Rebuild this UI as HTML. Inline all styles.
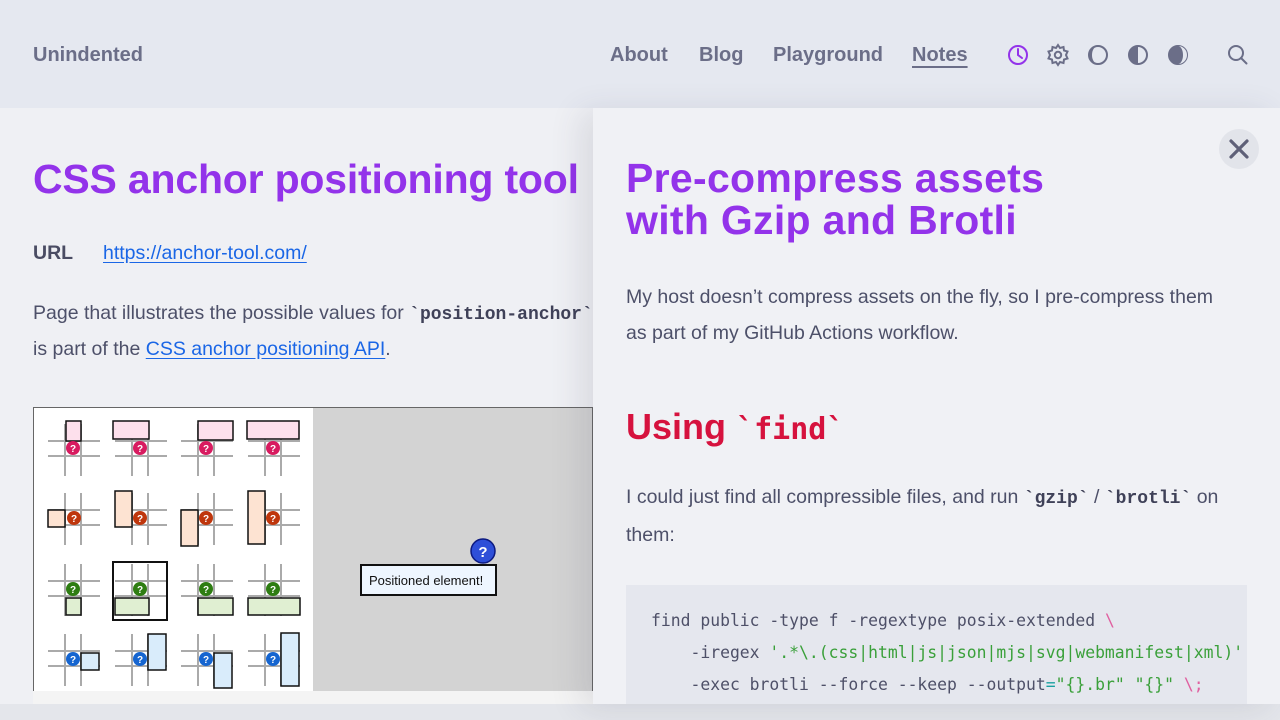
<!DOCTYPE html>
<html><head><meta charset="utf-8"><style>
*{margin:0;padding:0;box-sizing:border-box}
html,body{width:1280px;height:720px;overflow:hidden}
body{background:#e4e6eb;font-family:"Liberation Sans",sans-serif;position:relative}
.abs{position:absolute;white-space:nowrap}
#hdr{position:absolute;left:0;top:0;width:1280px;height:108px;background:#e5e8f0}
.nav{font-size:20px;font-weight:bold;color:#6b6e88;top:44px}
#left{position:absolute;left:0;top:108px;width:700px;height:596px;background:#eff0f4}
#panel{position:absolute;left:593px;top:108px;width:687px;height:596px;background:#f0f1f5;box-shadow:-12px 4px 30px rgba(60,60,80,.12);overflow:hidden}
.h1{font-size:41px;font-weight:bold;color:#9333ea;letter-spacing:-0.2px}
.p{font-size:19.5px;color:#4d5069}
.code{font-family:"Liberation Mono","DejaVu Sans Mono",monospace;font-weight:bold;color:#3f4158;font-size:18px}
a{color:#1a66e6;text-decoration:underline;text-underline-offset:3px}
.pre{font-family:"DejaVu Sans Mono","Liberation Mono",monospace;font-size:16.4px;color:#4e5068;white-space:pre}
.g{color:#3aa03a}.pk{color:#e060a0}.t{color:#18a0a0}
</style></head><body>
<div id="hdr"></div>
<div class="abs nav" style="left:33px">Unindented</div>
<div class="abs nav" style="left:610px">About</div>
<div class="abs nav" style="left:699px">Blog</div>
<div class="abs nav" style="left:773px">Playground</div>
<div class="abs nav" style="left:912px;text-decoration:underline;text-underline-offset:5px;text-decoration-thickness:2px">Notes</div>
<svg class="abs" style="left:1000px;top:35px" width="260" height="40" viewBox="0 0 260 40" fill="none" stroke-width="2">
 <circle cx="18" cy="20" r="9" stroke="#9333ea"/><path d="M18 14v6l4 3" stroke="#9333ea" stroke-linecap="round"/>
 <g stroke="#6b6e88"><circle cx="58" cy="20" r="3.2"/><path d="M58 10l2 3 3.5-1 .5 3.5 3.5 1-1.5 3.5 1.5 3.5-3.5 1-.5 3.5-3.5-1-2 3-2-3-3.5 1-.5-3.5-3.5-1 1.5-3.5-1.5-3.5 3.5-1 .5-3.5 3.5 1z"/></g>
 <circle cx="98" cy="20" r="9" stroke="#6b6e88"/><path d="M98 11a9 9 0 0 0 0 18a6 9 0 0 1 0-18z" fill="#6b6e88"/>
 <circle cx="138" cy="20" r="9" stroke="#6b6e88"/><path d="M138 11a9 9 0 0 0 0 18z" fill="#6b6e88"/>
 <circle cx="178" cy="20" r="9" stroke="#6b6e88" fill="#6b6e88"/><path d="M178 11a5 9 0 0 1 0 18a9 9 0 0 0 0-18z" fill="#e5e8f0"/>
 <circle cx="236" cy="18" r="7" stroke="#6b6e88"/><path d="M241 23l5.5 5.5" stroke="#6b6e88" stroke-linecap="round"/>
</svg>

<div id="left"></div>
<div class="abs h1" style="left:33px;top:156px">CSS anchor positioning tool</div>
<div class="abs p" style="left:33px;top:242px;font-weight:bold;color:#4a4c63">URL</div>
<div class="abs p" style="left:103px;top:242px"><a>https://anchor-tool.com/</a></div>
<div class="abs p" style="left:33px;top:302px">Page that illustrates the possible values for <span class="code">`position-anchor`</span></div>
<div class="abs p" style="left:33px;top:338px">is part of the <a>CSS anchor positioning API</a>.</div>

<svg class="abs" style="left:33px;top:407px" width="560" height="297" viewBox="0 0 560 297">
 <rect x="0" y="0" width="560" height="297" fill="#fff"/>
 <rect x="280" y="0" width="280" height="284" fill="#d3d3d3"/>
 <rect x="0.5" y="0.5" width="559" height="296" fill="none" stroke="#666"/>
 <g stroke="#aaa" stroke-width="2">
  <path d="M15 34h52M15 49h52M32 17v52M48 17v52 M82 34h52M82 49h52M99 17v52M115 17v52 M148 34h52M148 49h52M165 17v52M181 17v52 M215 34h52M215 49h52M232 17v52M248 17v52"/>
  <path d="M15 103h52M15 118h52M32 86v52M48 86v52 M82 103h52M82 118h52M99 86v52M115 86v52 M148 103h52M148 118h52M165 86v52M181 86v52 M215 103h52M215 118h52M232 86v52M248 86v52"/>
  <path d="M15 174h52M15 189h52M32 157v52M48 157v52 M82 174h52M82 189h52M99 157v52M115 157v52 M148 174h52M148 189h52M165 157v52M181 157v52 M215 174h52M215 189h52M232 157v52M248 157v52"/>
  <path d="M15 244h52M15 259h52M32 227v52M48 227v52 M82 244h52M82 259h52M99 227v52M115 227v52 M148 244h52M148 259h52M165 227v52M181 227v52 M215 244h52M215 259h52M232 227v52M248 227v52"/>
 </g>
 <g stroke="#111" stroke-width="1.5">
  <rect x="33" y="14" width="15" height="20" fill="#fde0ec"/><rect x="80" y="14" width="36" height="18" fill="#fde0ec"/><rect x="165" y="14" width="35" height="19" fill="#fde0ec"/><rect x="214" y="14" width="52" height="18" fill="#fde0ec"/>
  <rect x="15" y="103" width="17" height="17" fill="#fde3d2"/><rect x="82" y="84" width="17" height="36" fill="#fde3d2"/><rect x="148" y="103" width="17" height="36" fill="#fde3d2"/><rect x="215" y="84" width="17" height="53" fill="#fde3d2"/>
  <rect x="33" y="191" width="15" height="17" fill="#e0efd2"/><rect x="80" y="155" width="54" height="58" fill="none" stroke-width="2"/><rect x="82" y="191" width="34" height="17" fill="#e0efd2"/><rect x="165" y="191" width="35" height="17" fill="#e0efd2"/><rect x="215" y="191" width="52" height="17" fill="#e0efd2"/>
  <rect x="48" y="246" width="18" height="17" fill="#d9ecfb"/><rect x="115" y="227" width="18" height="36" fill="#d9ecfb"/><rect x="181" y="246" width="18" height="35" fill="#d9ecfb"/><rect x="248" y="226" width="18" height="53" fill="#d9ecfb"/>
 </g>
 <g fill="#d81b60"><circle cx="40" cy="41" r="7"/><circle cx="107" cy="41" r="7"/><circle cx="173" cy="41" r="7"/><circle cx="240" cy="41" r="7"/></g>
 <g fill="#bf360c"><circle cx="41" cy="111" r="7"/><circle cx="107" cy="111" r="7"/><circle cx="173" cy="111" r="7"/><circle cx="240" cy="111" r="7"/></g>
 <g fill="#2e7d12"><circle cx="40" cy="182" r="7"/><circle cx="107" cy="182" r="7"/><circle cx="173" cy="182" r="7"/><circle cx="240" cy="182" r="7"/></g>
 <g fill="#1565d0"><circle cx="40" cy="252" r="7"/><circle cx="107" cy="252" r="7"/><circle cx="173" cy="252" r="7"/><circle cx="240" cy="252" r="7"/></g>
 <g font-size="10" font-weight="bold" fill="#fff" text-anchor="middle" font-family="Liberation Sans">
  <text x="40" y="45">?</text><text x="107" y="45">?</text><text x="173" y="45">?</text><text x="240" y="45">?</text>
  <text x="41" y="115">?</text><text x="107" y="115">?</text><text x="173" y="115">?</text><text x="240" y="115">?</text>
  <text x="40" y="186">?</text><text x="107" y="186">?</text><text x="173" y="186">?</text><text x="240" y="186">?</text>
  <text x="40" y="256">?</text><text x="107" y="256">?</text><text x="173" y="256">?</text><text x="240" y="256">?</text>
 </g>
 <rect x="0" y="284" width="560" height="13" fill="#f4f4f4"/>
 <rect x="328" y="158" width="135" height="30" fill="#eef6ff" stroke="#111" stroke-width="2"/>
 <text x="336" y="178" font-size="13" font-family="Liberation Sans" fill="#111">Positioned element!</text>
 <circle cx="450" cy="144" r="12" fill="#2e4fd8" stroke="#0c1a80" stroke-width="1.5"/>
 <text x="450" y="150" font-size="15" font-weight="bold" fill="#fff" text-anchor="middle" font-family="Liberation Sans">?</text>
</svg>

<div id="panel"></div>
<div class="abs" style="left:1219px;top:129px;width:40px;height:40px;border-radius:50%;background:#e2e4ea"></div>
<svg class="abs" style="left:1219px;top:129px" width="40" height="40"><path d="M12 12l16 16M28 12L12 28" stroke="#5f6078" stroke-width="3.2" stroke-linecap="round"/></svg>
<div class="abs h1" style="left:626px;top:157px;line-height:42px;letter-spacing:0.3px">Pre-compress assets<br>with Gzip and Brotli</div>
<div class="abs p" style="left:626px;top:279px;line-height:36px">My host doesn’t compress assets on the fly, so I pre-compress them<br>as part of my GitHub Actions workflow.</div>
<div class="abs" style="left:626px;top:406px;font-size:36px;font-weight:bold;color:#d6123e">Using <span style="font-family:'DejaVu Sans Mono',monospace;font-size:30px">`find`</span></div>
<div class="abs p" style="left:626px;top:479px;line-height:36px">I could just find all compressible files, and run <span class="code">`gzip`</span> / <span class="code">`brotli`</span> on<br>them:</div>
<div class="abs" style="left:626px;top:585px;width:621px;height:119px;background:#e5e7ee;overflow:hidden">
 <div class="abs pre" style="left:25px;top:20px;line-height:32px">find public -type f -regextype posix-extended <span class="pk">\</span>
    -iregex <span class="g">'.*\.(css|html|js|json|mjs|svg|webmanifest|xml)'</span> <span class="pk">\</span>
    -exec brotli --force --keep --output<span class="t">=</span><span class="g">"{}.br"</span> <span class="g">"{}"</span> <span class="pk">\;</span></div>
</div>
</body></html>
